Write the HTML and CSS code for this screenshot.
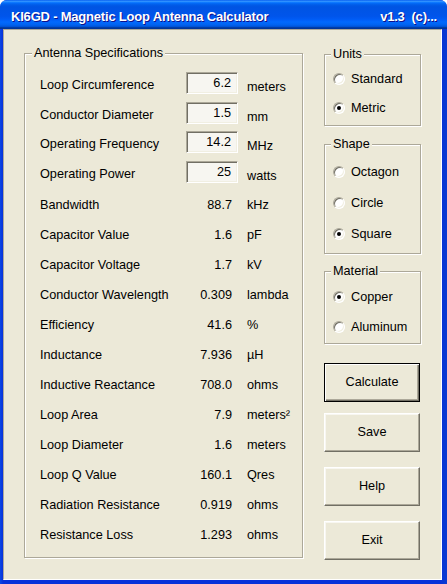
FILE: index.html
```html
<!DOCTYPE html>
<html>
<head>
<meta charset="utf-8">
<link rel="stylesheet" href="styles.css">
</head>
<body>
<div class="window">
  <div class="titlebar">
    <span class="title">KI6GD - Magnetic Loop Antenna Calculator</span>
    <span class="ver">v1.3  (c)...</span>
  </div>
  <div class="client">
    <div class="group specs">
      <div class="legend">Antenna Specifications</div>
      <div class="rows">
        <div class="row in"><span class="lbl">Loop Circumference</span><span class="box">6.2</span><span class="unit">meters</span></div>
        <div class="row in"><span class="lbl">Conductor Diameter</span><span class="box">1.5</span><span class="unit">mm</span></div>
        <div class="row in"><span class="lbl">Operating Frequency</span><span class="box">14.2</span><span class="unit">MHz</span></div>
        <div class="row in"><span class="lbl">Operating Power</span><span class="box">25</span><span class="unit">watts</span></div>
        <div class="outputs">
          <div class="row out"><span class="lbl">Bandwidth</span><span class="val">88.7</span><span class="unit">kHz</span></div>
          <div class="row out"><span class="lbl">Capacitor Value</span><span class="val">1.6</span><span class="unit">pF</span></div>
          <div class="row out"><span class="lbl">Capacitor Voltage</span><span class="val">1.7</span><span class="unit">kV</span></div>
          <div class="row out"><span class="lbl">Conductor Wavelength</span><span class="val">0.309</span><span class="unit">lambda</span></div>
          <div class="row out"><span class="lbl">Efficiency</span><span class="val">41.6</span><span class="unit">%</span></div>
          <div class="row out"><span class="lbl">Inductance</span><span class="val">7.936</span><span class="unit">µH</span></div>
          <div class="row out"><span class="lbl">Inductive Reactance</span><span class="val">708.0</span><span class="unit">ohms</span></div>
          <div class="row out"><span class="lbl">Loop Area</span><span class="val">7.9</span><span class="unit">meters²</span></div>
          <div class="row out"><span class="lbl">Loop Diameter</span><span class="val">1.6</span><span class="unit">meters</span></div>
          <div class="row out"><span class="lbl">Loop Q Value</span><span class="val">160.1</span><span class="unit">Qres</span></div>
          <div class="row out"><span class="lbl">Radiation Resistance</span><span class="val">0.919</span><span class="unit">ohms</span></div>
          <div class="row out"><span class="lbl">Resistance Loss</span><span class="val">1.293</span><span class="unit">ohms</span></div>
        </div>
      </div>
    </div>
    <div class="side">
      <div class="group units">
        <div class="legend">Units</div>
        <div class="opts">
          <div class="radio"><span class="dot"></span>Standard</div>
          <div class="radio"><span class="dot on"></span>Metric</div>
        </div>
      </div>
      <div class="group shape">
        <div class="legend">Shape</div>
        <div class="opts">
          <div class="radio"><span class="dot"></span>Octagon</div>
          <div class="radio"><span class="dot"></span>Circle</div>
          <div class="radio"><span class="dot on"></span>Square</div>
        </div>
      </div>
      <div class="group material">
        <div class="legend">Material</div>
        <div class="opts">
          <div class="radio"><span class="dot on"></span>Copper</div>
          <div class="radio"><span class="dot"></span>Aluminum</div>
        </div>
      </div>
      <div class="buttons">
        <button class="btn default">Calculate</button>
        <button class="btn save">Save</button>
        <button class="btn help">Help</button>
        <button class="btn exit">Exit</button>
      </div>
    </div>
  </div>
</div>
</body>
</html>
```

FILE: styles.css
```css
html, body {
  margin: 0;
  padding: 0;
  background: #ffffff;
}

body {
  font-family: "Liberation Sans", Arial, sans-serif;
  font-size: 12.7px;
  color: #000;
}

.window {
  width: 447px;
  height: 584px;
  box-sizing: border-box;
  background: linear-gradient(to right, #0a48e6 0px, #0831d9 3px, #0831d9 440px, #0a3bd0 447px);
  border-radius: 7px 7px 0 0;
  display: flex;
  flex-direction: column;
  overflow: hidden;
}

.titlebar {
  height: 29px;
  flex: none;
  box-sizing: border-box;
  padding: 3px 10px 0 11px;
  display: flex;
  justify-content: space-between;
  align-items: center;
  color: #fff;
  font-weight: bold;
  font-size: 13px;
  letter-spacing: -0.2px;
  text-shadow: 1px 1px #0f1089;
  background: linear-gradient(to bottom,
    #0058ee 0%, #3593ff 4%, #288eff 6%, #127dff 8%, #036ffc 10%,
    #0262ee 14%, #0057e5 20%, #0054e3 24%, #0055eb 56%, #005bf5 66%,
    #026afe 76%, #0062ef 86%, #0052d6 92%, #0040ab 94%, #003092 100%);
}

.ver {
  white-space: pre;
}

.client {
  flex: 1;
  margin: 0 5px 4px 3px;
  background: #ECE9D8;
  border: 1px solid;
  border-color: #ACA899 #ffffff #ffffff #ACA899;
  display: flex;
  align-items: flex-start;
  padding: 23px 0 0 20px;
}

.group {
  border: 1px solid #ACA899;
  box-shadow: inset 1px 1px #ffffff, 1px 1px #ffffff;
  box-sizing: border-box;
}

.legend {
  width: fit-content;
  margin: -8px 0 0 6px;
  padding: 0 2px;
  line-height: 15px;
  background: #ECE9D8;
}

.specs {
  width: 279px;
  padding-bottom: 7px;
}

.specs .legend {
  margin-left: 7px;
}

.rows {
  margin-top: 9px;
}

.outputs {
  margin-top: 1px;
}

.row {
  display: grid;
  grid-template-columns: 146px 52px auto;
  align-items: center;
  height: 30px;
  padding-left: 15px;
}

.in {
  height: 29.7px;
}

.box {
  height: 22px;
  box-sizing: border-box;
  margin-top: -4px;
  border: 1px solid;
  border-color: #ACA899 #ffffff #ffffff #ACA899;
  box-shadow: inset 1px 1px #716F64, inset -1px -1px #F1EFE2;
  background: #F7F6F1;
  text-align: right;
  padding-right: 6px;
  line-height: 20px;
}

.unit {
  padding-left: 9px;
}

.in .unit {
  padding-top: 4px;
}

.val {
  text-align: right;
  padding-right: 6px;
}

.side {
  width: 97px;
  margin-left: 21px;
  margin-top: 1px;
  display: flex;
  flex-direction: column;
}

.opts {
  padding-left: 8px;
}

.radio {
  display: flex;
  align-items: center;
  gap: 6px;
}

.units .opts { margin-top: 2px; }
.units .radio { height: 29px; }
.units { padding-bottom: 3px; }

.shape { margin-top: 18px; padding-bottom: 4px; }
.shape .opts { margin-top: 4px; }
.shape .radio { height: 31px; }

.material { margin-top: 17px; padding-bottom: 1px; }
.material .opts { margin-top: 3px; }
.material .radio { height: 30px; }

.dot {
  width: 12px;
  height: 12px;
  box-sizing: border-box;
  border-radius: 50%;
  border: 1px solid;
  border-color: #ACA899 #ffffff #ffffff #ACA899;
  box-shadow: inset 1px 1px #716F64, inset -1px -1px #F1EFE2;
  background: #ffffff;
  display: flex;
  align-items: center;
  justify-content: center;
  flex: none;
}

.dot.on::after {
  content: "";
  width: 4px;
  height: 4px;
  border-radius: 50%;
  background: #000;
}

.buttons {
  display: flex;
  flex-direction: column;
  margin-top: 19px;
}

.btn {
  width: 96px;
  height: 39px;
  box-sizing: border-box;
  margin: 0;
  padding: 0 0 2px 0;
  font-family: "Liberation Sans", Arial, sans-serif;
  font-size: 12.7px;
  color: #000;
  background: #ECE9D8;
  border: 1px solid;
  border-color: #ffffff #716F64 #716F64 #ffffff;
  box-shadow: inset -1px -1px #ACA899, inset 1px 1px #F8F7F1;
}

.btn.default {
  border: 1px solid #000;
  box-shadow: inset 1px 1px #ffffff, inset -1px -1px #716F64, inset -2px -2px #ACA899;
}

.btn.save { margin-top: 11px; }
.btn.help { margin-top: 15px; }
.btn.exit { margin-top: 15px; }
```
